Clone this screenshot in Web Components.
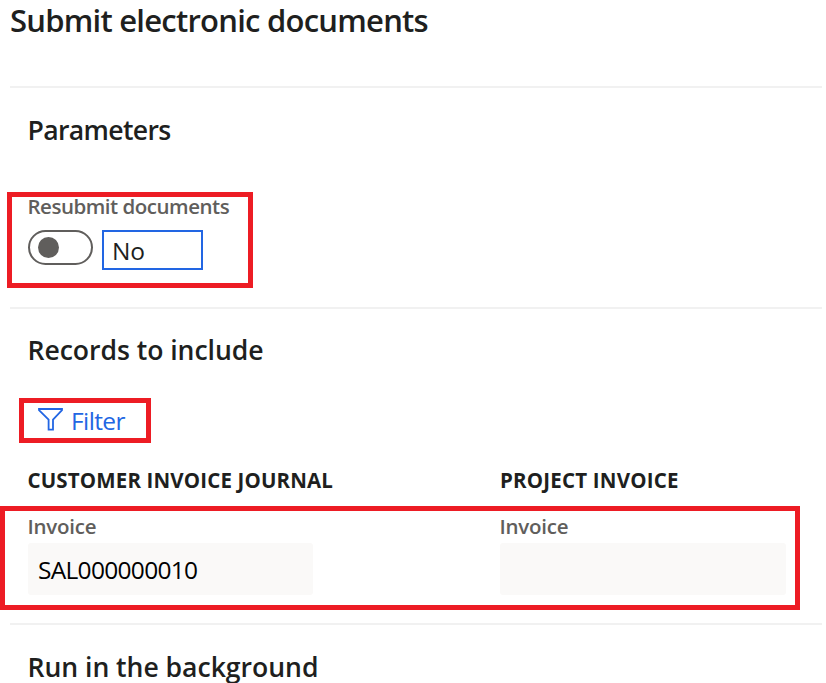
<!DOCTYPE html>
<html lang="en">
<head>
<meta charset="utf-8">
<title>Submit electronic documents</title>
<style>
  body { margin: 0; background: #fff; color: #201f1e; font-family: "Open Sans", "Noto Sans", sans-serif; }
</style>
</head>
<body>
<submit-dialog>
  <span slot="title">Submit electronic documents</span>
  <form-section style="--top:26px;--bottom:19px;--spacing:-.65px">
    <span slot="heading">Parameters</span>
    <mark-frame style="margin:46px 0 0 7px;width:246px;height:96px">
      <toggle-field value="No">Resubmit documents</toggle-field>
    </mark-frame>
  </form-section>
  <form-section style="--top:25px;--bottom:13px;--spacing:-.05px">
    <span slot="heading">Records to include</span>
    <mark-frame style="margin:32px 0 0 19px;width:132px;height:45px">
      <filter-button>Filter</filter-button>
    </mark-frame>
    <group-titles>
      <span style="letter-spacing:.15px">CUSTOMER INVOICE JOURNAL</span>
      <span style="letter-spacing:.2px">PROJECT INVOICE</span>
    </group-titles>
    <mark-frame style="margin-top:13px;width:800px;height:104px">
      <field-row>
        <read-field label="Invoice" style="width:285px">SAL000000010</read-field>
        <read-field label="Invoice" style="width:286px"></read-field>
      </field-row>
    </mark-frame>
  </form-section>
  <form-section style="--top:26px;--bottom:0px;--spacing:-.04px">
    <span slot="heading">Run in the background</span>
  </form-section>
</submit-dialog>
<script>
  const define = (name, markup, setup) => {
    const template = document.createElement('template');
    template.innerHTML = markup;
    customElements.define(name, class extends HTMLElement {
      constructor() {
        super();
        this.attachShadow({ mode: 'open' }).append(template.content.cloneNode(true));
      }
      connectedCallback() { if (setup) setup(this, this.shadowRoot); }
    });
  };

  define('submit-dialog', `
    <style>
      :host { display: block; height: 683px; }
      h1 { margin: 0; height: 86px; padding-left: 10px; font-size: 31px; font-weight: 600; line-height: 40px; letter-spacing: -.76px; box-sizing: border-box; }
    </style>
    <h1><slot name="title"></slot></h1><slot></slot>`);

  define('form-section', `
    <style>
      :host { display: block; padding-bottom: var(--bottom); }
      .rule { height: 2px; margin: 0 4px 0 10px; background: #f1f1f1; }
      h2 { margin: 0; padding: var(--top) 0 0 27.5px; font-size: 26.6px; font-weight: 600; line-height: 32px; letter-spacing: var(--spacing); }
    </style>
    <div class="rule"></div>
    <h2><slot name="heading"></slot></h2><slot></slot>`);

  define('mark-frame', `
    <style>:host { display: block; box-sizing: border-box; border: 5px solid #ed1c24; }</style>
    <slot></slot>`);

  define('toggle-field', `
    <style>
      :host { display: block; padding-left: 16px; }
      .label { margin-left: -.5px; color: #605e5c; font-size: 20.5px; font-weight: 600; line-height: 18px; letter-spacing: -.48px; white-space: nowrap; }
      .row { display: flex; gap: 9px; margin-top: 15px; }
      .switch { display: flex; align-items: center; box-sizing: border-box; width: 65px; height: 35px; padding-left: 8px; border: 2px solid #605e5c; border-radius: 18px; }
      .knob { width: 21px; height: 21px; border-radius: 50%; background: #605e5c; }
      .value { box-sizing: border-box; width: 101px; height: 40px; padding-left: 8px; border: 2px solid #2266e3; font-size: 24.5px; line-height: 37px; letter-spacing: -.1px; }
    </style>
    <div class="label"><slot></slot></div>
    <div class="row"><div class="switch"><div class="knob"></div></div><div class="value"></div></div>`,
    (host, root) => { root.querySelector('.value').textContent = host.getAttribute('value'); });

  define('filter-button', `
    <style>
      :host { display: flex; align-items: center; gap: 6px; height: 35px; padding-left: 13px; color: #2266e3; font-size: 24.5px; line-height: 35px; letter-spacing: -.6px; }
      svg { flex: none; margin-bottom: 3px; }
    </style>
    <svg width="28" height="24" viewBox="0 0 28 24" fill="none" stroke="currentColor" stroke-width="1.8"><path d="M2 2H25V3.2L16 12.6V22.7H11.6V12.6L2 3.2Z"/></svg>
    <span><slot></slot></span>`);

  define('group-titles', `
    <style>
      :host { display: grid; grid-template-columns: 472.5px 1fr; margin-top: 24px; padding-left: 27.5px; font-size: 20.5px; font-weight: 700; line-height: 26px; }
    </style>
    <slot></slot>`);

  define('field-row', `
    <style>:host { display: grid; grid-template-columns: 472px 1fr; padding: 2px 0 0 23px; }</style>
    <slot></slot>`);

  define('read-field', `
    <style>
      :host { display: block; }
      .label { margin-left: -.5px; color: #605e5c; font-size: 20.5px; font-weight: 600; line-height: 26px; letter-spacing: -.22px; }
      .box { box-sizing: border-box; height: 52px; margin-top: 4px; padding-left: 10px; border-radius: 3px; background: #faf9f8; color: #000; font-size: 24.5px; line-height: 53px; letter-spacing: -.7px; }
    </style>
    <div class="label"></div><div class="box"><slot></slot></div>`,
    (host, root) => { root.querySelector('.label').textContent = host.getAttribute('label'); });
</script>
</body>
</html>
